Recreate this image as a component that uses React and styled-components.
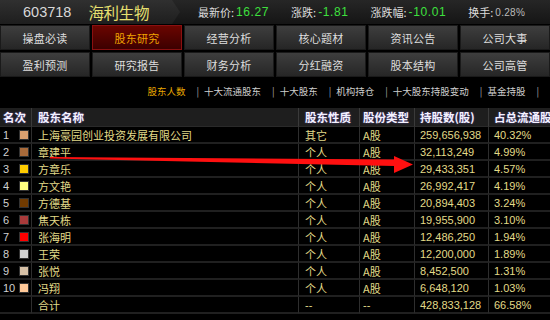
import React from "react";
import styled, { createGlobalStyle } from "styled-components";

const GlobalStyle = createGlobalStyle`
  html, body {
    margin: 0;
    padding: 0;
    background: #000;
  }
  body {
    font-family: "Noto Sans CJK SC", "Liberation Sans", sans-serif;
  }
`;

const Page = styled.div`
  position: relative;
  width: 550px;
  height: 320px;
  overflow: hidden;
  background: #000;
`;

const TopBar = styled.div`
  display: flex;
  align-items: stretch;
  height: 24px;
  background: linear-gradient(#262626, #151515);
`;

const StockBlock = styled.div`
  display: flex;
  align-items: center;
  gap: 17px;
  width: 180px;
  padding-left: 23px;
  box-sizing: border-box;
  background: linear-gradient(#303030, #1e1e1e);
  clip-path: polygon(0 0, 172px 0, 180px 50%, 172px 100%, 0 100%);
`;

const Code = styled.span`
  font-family: "Liberation Sans", sans-serif;
  font-size: 14.5px;
  color: #d8d8d8;
`;

const StockName = styled.span`
  font-size: 15.5px;
  color: #e8e070;
  letter-spacing: -0.3px;
`;

const Quotes = styled.div`
  display: flex;
  align-items: center;
  gap: 22px;
  padding-left: 18px;
`;

const Quote = styled.span`
  display: flex;
  align-items: center;
  font-size: 11px;
  color: #dcdcdc;
`;

const QuoteValue = styled.span`
  font-family: "Liberation Sans", sans-serif;
  font-size: ${(p) => (p.$small ? "10px" : "12px")};
  letter-spacing: ${(p) => (p.$small ? "0.3px" : "0.6px")};
  color: ${(p) => p.$color};
  margin-left: 2px;
`;

const Nav = styled.div`
  display: grid;
  grid-template-columns: repeat(6, 1fr);
  grid-auto-rows: 25px;
  gap: 2px;
  margin-top: 1px;
`;

const NavButton = styled.div`
  display: flex;
  align-items: center;
  justify-content: center;
  font-size: 11px;
  letter-spacing: 0.3px;
  box-sizing: border-box;
  border: 1px solid ${(p) => (p.$active ? "#8a1010" : "#1a1a1a")};
  color: ${(p) => (p.$active ? "#f0a400" : "#dedede")};
  background: ${(p) =>
    p.$active
      ? "linear-gradient(#6a0500, #3c0000)"
      : "linear-gradient(#3e3e3e, #262626)"};
`;

const SubTabs = styled.div`
  display: flex;
  justify-content: flex-end;
  align-items: center;
  height: 31px;
  padding: 0 6px 3px 0;
  box-sizing: border-box;
  font-size: 9.5px;
`;

const SubTab = styled.span`
  color: ${(p) => (p.$active ? "#e8a800" : "#cfcfcf")};
`;

const Sep = styled.span`
  color: #aaa;
  margin: 0 5px 0 11px;
`;

const Table = styled.div`
  display: grid;
  grid-template-columns: 31px 267px 61px 55px 74px 1fr;
`;

const HeadCell = styled.div`
  height: 19px;
  display: flex;
  align-items: center;
  padding-left: ${(p) => p.$pad || 6}px;
  background: #1e1e1e;
  border-left: ${(p) => (p.$first ? "none" : "1px solid #3a3a3a")};
  border-bottom: 1px solid #2a2a2a;
  box-sizing: border-box;
  font-size: 11.5px;
  font-weight: bold;
  color: #f4f2ff;
  text-shadow: 0 0 2px #5a4a9a;
  white-space: nowrap;
  overflow: hidden;
`;

const Cell = styled.div`
  height: 17px;
  display: flex;
  align-items: center;
  padding-left: ${(p) => p.$pad || 6}px;
  box-sizing: border-box;
  border-left: ${(p) => (p.$first ? "none" : "1px solid #2e2e2e")};
  border-bottom: 2px solid #202020;
  font-size: 11px;
  font-family: ${(p) =>
    p.$num ? '"Liberation Sans", sans-serif' : '"Noto Sans CJK SC", sans-serif'};
  color: #e2da88;
  white-space: nowrap;
  overflow: hidden;
`;

const RankCell = styled(Cell)`
  justify-content: space-between;
  padding: 0 2px 0 3px;
  color: #d0d0d0;
`;

const Swatch = styled.span`
  width: 8px;
  height: 8px;
  border: 1px solid #333;
  background: ${(p) => p.$color};
`;

const Arrow = styled.svg`
  position: absolute;
  left: 0;
  top: 0;
  pointer-events: none;
`;

const rows = [
  ["1", "#d9a070", "上海豪园创业投资发展有限公司", "其它", "A股", "259,656,938", "40.32%"],
  ["2", "#a86a3a", "章建平", "个人", "A股", "32,113,249", "4.99%"],
  ["3", "#ffcc00", "方章乐", "个人", "A股", "29,433,351", "4.57%"],
  ["4", "#ffff80", "方文艳", "个人", "A股", "26,992,417", "4.19%"],
  ["5", "#703a00", "方德基", "个人", "A股", "20,894,403", "3.24%"],
  ["6", "#a83a3a", "焦天栋", "个人", "A股", "19,955,900", "3.10%"],
  ["7", "#ff0000", "张海明", "个人", "A股", "12,486,250", "1.94%"],
  ["8", "#d0d0d0", "王荣", "个人", "A股", "12,200,000", "1.89%"],
  ["9", "#d6c0a6", "张悦", "个人", "A股", "8,452,500", "1.31%"],
  ["10", "#ffc898", "冯翔", "个人", "A股", "6,648,120", "1.03%"],
];

const navItems = [
  "操盘必读", "股东研究", "经营分析", "核心题材", "资讯公告", "公司大事",
  "盈利预测", "研究报告", "财务分析", "分红融资", "股本结构", "公司高管",
];

const tabs = ["股东人数", "十大流通股东", "十大股东", "机构持仓", "十大股东持股变动", "基金持股"];

export default function App() {
  return (
    <Page>
      <GlobalStyle />
      <TopBar>
        <StockBlock>
          <Code>603718</Code>
          <StockName>海利生物</StockName>
        </StockBlock>
        <Quotes>
          <Quote>最新价:<QuoteValue $color="#3ee03e">16.27</QuoteValue></Quote>
          <Quote>涨跌:<QuoteValue $color="#3ee03e">-1.81</QuoteValue></Quote>
          <Quote>涨跌幅:<QuoteValue $color="#3ee03e">-10.01</QuoteValue></Quote>
          <Quote>换手:<QuoteValue $small $color="#bbbbbb">0.28%</QuoteValue></Quote>
        </Quotes>
      </TopBar>

      <Nav>
        {navItems.map((n) => (
          <NavButton key={n} $active={n === "股东研究"}>{n}</NavButton>
        ))}
      </Nav>

      <SubTabs>
        {tabs.map((t, i) => (
          <React.Fragment key={t}>
            <SubTab $active={i === 0}>{t}</SubTab>
            <Sep>|</Sep>
          </React.Fragment>
        ))}
      </SubTabs>

      <Table>
        <HeadCell $first $pad={3}>名次</HeadCell>
        <HeadCell>股东名称</HeadCell>
        <HeadCell $pad={6}>股东性质</HeadCell>
        <HeadCell $pad={3}>股份类型</HeadCell>
        <HeadCell $pad={5}>持股数(股)</HeadCell>
        <HeadCell $pad={5}>占总流通股本</HeadCell>

        {rows.map((r) => (
          <React.Fragment key={r[0]}>
            <RankCell $first $num>
              {r[0]}
              <Swatch $color={r[1]} />
            </RankCell>
            <Cell>{r[2]}</Cell>
            <Cell $pad={6}>{r[3]}</Cell>
            <Cell $pad={3}>{r[4]}</Cell>
            <Cell $pad={5} $num>{r[5]}</Cell>
            <Cell $pad={5} $num>{r[6]}</Cell>
          </React.Fragment>
        ))}

        <RankCell $first />
        <Cell>合计</Cell>
        <Cell $pad={6} $num>--</Cell>
        <Cell $pad={3} $num>--</Cell>
        <Cell $pad={5} $num>428,833,128</Cell>
        <Cell $pad={5} $num>66.58%</Cell>
      </Table>

      <Arrow width="550" height="320" viewBox="0 0 550 320">
        <polygon
          points="50,157 394,159.5 394,156 413,164.5 394,173 394,166 50,158.5"
          fill="#ff1010"
        />
      </Arrow>
    </Page>
  );
}
